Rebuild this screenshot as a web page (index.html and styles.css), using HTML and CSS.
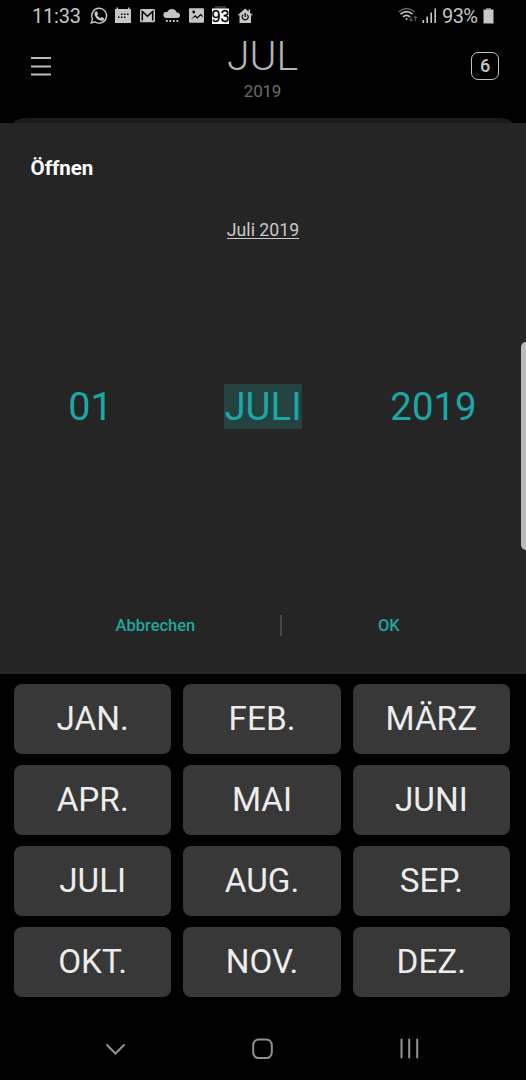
FILE: index.html
```html
<!DOCTYPE html>
<html lang="de">
<head>
<meta charset="utf-8">
<title>Kalender</title>
<link rel="stylesheet" href="styles.css">
</head>
<body>
<div class="screen">
  <header class="status">
    <span class="clock">11:33</span>
    <svg class="notifications" width="166" height="20" viewBox="89 6 166 20" fill="#c6c6c6">
      <!-- chat bubble with handset -->
      <path d="M91.200 23l1.300-4.100A7.400 7.400 0 1 1 95 21.800z" fill="none" stroke="#c6c6c6" stroke-width="1.400"/>
      <path d="M95.200 11.700q1-1 1.800-.2l1 2.200q.2.5-.8 1.500 1.200 2.200 3.200 3.100 1-1.400 1.500-1.200l2.200 1.100q.5.9-.6 2-1.300 1.100-3.600.2-3.800-1.500-5.200-5-.6-2.300.5-3.700z"/>
      <!-- calendar -->
      <path d="M115 9h1.500V7.500h1.500V9h10V7.500h1.500V9h1.500v14h-16V9z"/>
      <path d="M121 13.500h1.500V15H121zm3 0h1.500V15H124zm3 0h1.500V15H127zm-9 3h1.500V18H118zm3 0h1.500V18H121zm3 0h1.500V18H124z" fill="#000"/>
      <!-- mail -->
      <rect x="140" y="9" width="15" height="13.300" rx="1.300"/>
      <path d="M142.300 20.500v-9l5.200 4.800 5.200-4.800v9" fill="none" stroke="#000" stroke-width="1.500"/>
      <!-- rain cloud -->
      <path d="M166.500 18a3 3 0 0 1-.2-6q.6.1 1 .1a5 5 0 0 1 9.400.3q3.300.2 3.300 2.900 0 2.700-3 2.700z"/>
      <path d="M166 20h1.700v2H166zm3.500 0h1.700v2h-1.700zm3.500 0h1.700v2H173zm3.500 0h1.700v2h-1.700z"/>
      <!-- picture -->
      <rect x="189" y="8.300" width="15" height="14.400" rx="1"/>
      <path d="M191 19.300l4.200-4.300 2 2 3.500-3.300 2 2v1.600l-2-1.800-3.500 3.300-2-2z" fill="#000"/>
      <circle cx="193.700" cy="12" r="1.400" fill="#000"/>
      <!-- battery level badge -->
      <path d="M215 6h11v3h-11z" fill="#333"/>
      <path d="M212 8.500h17V24h-17z" fill="#fff"/>
      <text class="badge-text" x="220.500" y="22" text-anchor="middle">93</text>
      <!-- smart home -->
      <path d="M237.500 15.300L245.200 8.500l3.300 2.900V9.500h1.500v3.200l3 2.600h-2V23h-11.500v-7.700z"/>
      <path d="M243.200 14.600a3 3 0 1 0 4 0M245.200 13v4" fill="none" stroke="#000" stroke-width="1.200"/>
    </svg>
    <svg class="signals" width="42" height="20" viewBox="397 6 42 20" fill="none" stroke="#c6c6c6">
      <path d="M398.500 12Q406.500 5 414.500 12" stroke="#666" stroke-width="1.600"/>
      <path d="M400.500 14.200q6-5.200 12 0M403 16.800q3.500-3 7 0" stroke-width="1.700"/>
      <circle cx="406.500" cy="19" r="1" fill="#c6c6c6" stroke="none"/>
      <path d="M411 16.500v4.500m-1.500-1.500l1.500 1.500 1.500-1.500M415.500 21v-4.500m-1.500 1.500l1.500-1.500 1.500 1.500" stroke="#555" stroke-width="1.100"/>
      <path d="M423.300 20v3M427.200 16.500V23M431.200 12.500V23M435.200 8.500V23" stroke-width="1.600"/>
    </svg>
    <span class="percent">93%</span>
    <svg class="battery" width="11" height="17" viewBox="0 0 11 17"><path d="M3 1h5v2H3z" fill="#777"/><path d="M.5 2.500h10v14H.5z" fill="#c6c6c6"/></svg>
  </header>

  <div class="appbar">
    <svg class="menu" width="20" height="22" viewBox="0 0 20 22"><path d="M0 2h20M0 10.500h20M0 18.500h20" stroke="#bbb" stroke-width="2"/></svg>
    <div class="heading">
      <div class="month">JUL</div>
      <div class="year">2019</div>
    </div>
    <div class="today">6</div>
  </div>
  <div class="sheet-top"></div>

  <main class="dialog">
    <h1 class="title">Öffnen</h1>
    <div class="current"><span class="current-text">Juli 2019</span></div>
    <div class="spinners">
      <span class="spin day">01</span>
      <span class="spin name">JULI</span>
      <span class="spin num">2019</span>
    </div>
    <div class="actions">
      <span class="cancel">Abbrechen</span>
      <span class="divider"></span>
      <span class="ok">OK</span>
    </div>
    <div class="edge"></div>
  </main>

  <section class="keys">
    <div class="key">JAN.</div><div class="key">FEB.</div><div class="key">MÄRZ</div>
    <div class="key">APR.</div><div class="key">MAI</div><div class="key">JUNI</div>
    <div class="key">JULI</div><div class="key">AUG.</div><div class="key">SEP.</div>
    <div class="key">OKT.</div><div class="key">NOV.</div><div class="key">DEZ.</div>
  </section>

  <nav class="nav">
    <svg width="22" height="22" viewBox="0 0 22 22"><path d="M2 7l8.500 8.500L19 7"/></svg>
    <svg width="22" height="22" viewBox="0 0 22 22"><rect x="1.200" y="1.500" width="18.600" height="18.600" rx="5.500"/></svg>
    <svg width="22" height="22" viewBox="0 0 22 22"><path d="M3.500 1.500v18M11.200 1.500v18M19.200 1.500v18"/></svg>
  </nav>
</div>
</body>
</html>
```
FILE: styles.css
```css
* { box-sizing: border-box; }
body { margin: 0; background: #000; font-family: Roboto, sans-serif; }
.screen { width: 526px; height: 1080px; overflow: hidden; background: #000; display: flex; flex-direction: column; }

.status { height: 32px; display: flex; align-items: center; padding-left: 32px; color: #c6c6c6; font-size: 20px; line-height: 32px; }
.clock { width: 57px; font-weight: 400; letter-spacing: -0.2px; }
.signals { margin-left: 142px; }
.percent { width: 44px; padding-left: 3px; letter-spacing: -0.6px; }
.battery { margin-bottom: 2px; }
.badge-text { font-family: "Liberation Sans", sans-serif; font-size: 16px; fill: #000; stroke: #000; stroke-width: 0.3px; }

.appbar { height: 86px; display: flex; justify-content: space-between; padding: 0 27px 0 31px; }
.menu { margin-top: 24px; }
.heading { width: 200px; margin-left: 3px; text-align: center; }
.month { height: 48px; line-height: 48px; color: #b4b4b4; font-size: 41px; font-weight: 300; }
.year { line-height: 22px; color: #6c6c6c; font-size: 17px; letter-spacing: -0.2px; }
.today { width: 28px; height: 28px; margin-top: 20px; border: 1.500px solid #c0c0c0; border-radius: 7px; color: #c6c6c6; font-size: 18px; font-weight: 500; line-height: 26px; text-align: center; }
.sheet-top { height: 5px; margin: 0 14px; background: #1b1b1b; border-radius: 14px 14px 0 0 / 5px 5px 0 0; }

.dialog { position: relative; height: 551px; background: #252525; }
.title { margin: 0; padding: 33px 0 0 30.500px; color: #fff; font-size: 20.500px; font-weight: 700; line-height: 24px; }
.current { padding-top: 38px; text-align: center; color: #c9c9c9; font-size: 17.700px; line-height: 24px; }
.current-text { text-decoration: underline; text-decoration-thickness: 1px; text-underline-offset: 2px; }
.spinners { display: grid; grid-template-columns: 181px 164px 177px; justify-items: center; padding-top: 142px; color: #1ba7a5; font-size: 38.400px; line-height: 45px; }
.day { font-size: 39.500px; }
.name { background: #234240; padding: 0 0.500px; }
.actions { display: flex; align-items: center; margin-top: 186px; height: 21px; color: #22a69f; font-size: 16.500px; font-weight: 500; line-height: 22px; }
.cancel { width: 280px; padding: 1px 0 0 115.500px; }
.divider { width: 1.500px; height: 21px; background: #484848; }
.ok { padding: 1px 0 0 96.500px; }
.edge { position: absolute; top: 219px; right: 0; width: 5px; height: 208px; background: #bababa; border-radius: 5px 0 0 5px; }

.keys { display: grid; grid-template-columns: repeat(3, 1fr); grid-auto-rows: 70px; gap: 11px 12px; padding: 10px 16px 0 14px; }
.key { display: flex; align-items: center; justify-content: center; background: #383838; border-radius: 8px; color: #ececec; font-size: 33.300px; line-height: 40px; padding-bottom: 1px; }

.nav { display: flex; justify-content: space-between; margin-top: 41px; padding: 0 106px 0 105px; }
.nav svg { fill: none; stroke: #929292; stroke-width: 2; stroke-linecap: round; }
```
